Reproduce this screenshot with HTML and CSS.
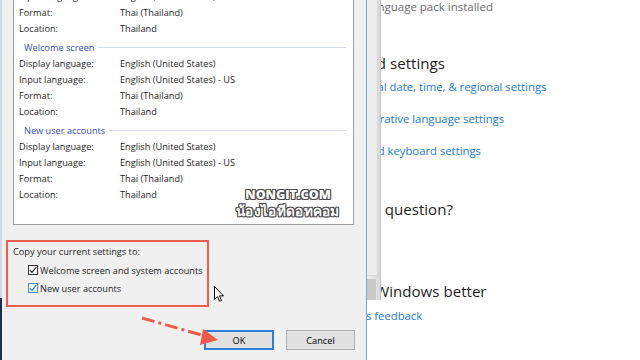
FILE: index.html
```html
<!DOCTYPE html>
<html lang="en">

<head>
  <meta charset="UTF-8">
  <meta name="viewport" content="width=device-width, initial-scale=1.0">
  <title>Region settings</title>
  <link rel="stylesheet" href="styles.css">
</head>

<body>
  <div class="screen">

    <!-- settings app behind the dialog -->
    <div class="settings">
      <p class="status">Language pack installed</p>
      <h2 class="heading related">Related settings</h2>
      <a class="link link-first" href="#">Additional date, time, &amp; regional settings</a>
      <a class="link" href="#">Administrative language settings</a>
      <a class="link" href="#">Advanced keyboard settings</a>
      <h2 class="heading question">Have a question?</h2>
      <h2 class="heading better">Make Windows better</h2>
      <a class="link feedback" href="#">Give us feedback</a>
    </div>

    <!-- edge of the region window peeking out -->
    <div class="backwin">
      <div class="backwin-track"></div>
      <div class="backwin-thumb"></div>
    </div>

    <div class="dialog">
      <div class="panel">
        <div class="panel-body">
          <div class="row"><span>Input language:</span><span>English (United States) - US</span></div>
          <div class="row"><span>Format:</span><span>Thai (Thailand)</span></div>
          <div class="row"><span>Location:</span><span>Thailand</span></div>

          <div class="group-title"><span>Welcome screen</span></div>
          <div class="row"><span>Display language:</span><span>English (United States)</span></div>
          <div class="row"><span>Input language:</span><span>English (United States) - US</span></div>
          <div class="row"><span>Format:</span><span>Thai (Thailand)</span></div>
          <div class="row"><span>Location:</span><span>Thailand</span></div>

          <div class="group-title"><span>New user accounts</span></div>
          <div class="row"><span>Display language:</span><span>English (United States)</span></div>
          <div class="row"><span>Input language:</span><span>English (United States) - US</span></div>
          <div class="row"><span>Format:</span><span>Thai (Thailand)</span></div>
          <div class="row"><span>Location:</span><span>Thailand</span></div>
        </div>
      </div>

      <div class="copy-box">
        <div class="copy-title">Copy your current settings to:</div>
        <label class="check check-first">
          <span class="box"><svg width="8" height="8" viewBox="0 0 8 8"><polyline points="0.8,4.2 3,6.4 7.3,1.2" fill="none" stroke="#222" stroke-width="1.2"/></svg></span>
          Welcome screen and system accounts
        </label>
        <label class="check hover">
          <span class="box"><svg width="8" height="8" viewBox="0 0 8 8"><polyline points="0.8,4.2 3,6.4 7.3,1.2" fill="none" stroke="#2b7fd6" stroke-width="1.2"/></svg></span>
          New user accounts
        </label>
      </div>

      <div class="buttons">
        <button class="btn default" type="button">OK</button>
        <button class="btn" type="button">Cancel</button>
      </div>
    </div>

    <div class="watermark">
      <div class="wm-en">NONGIT.COM</div>
      <div class="wm-th">น้องไอทีดอทคอม</div>
    </div>

    <svg class="arrow" width="640" height="360" viewBox="0 0 640 360">
      <line x1="142" y1="318" x2="205" y2="336" stroke="#ef5a4b" stroke-width="3" stroke-dasharray="13 4 3 4" />
      <polygon points="203,329 218,340 200,345" fill="#ef5a4b" />
    </svg>

    <svg class="cursor" width="12" height="17" viewBox="0 0 12 17">
      <path d="M0.5 0.5 V13.5 L3.6 10.6 L5.6 15.3 L7.5 14.5 L5.5 9.9 H9.7 Z" fill="#fff" stroke="#111" stroke-width="1" />
    </svg>
  </div>
</body>

</html>
```

FILE: styles.css
```css
body {
  margin: 0;
  background: #fff;
}

.screen {
  position: relative;
  width: 640px;
  height: 360px;
  overflow: hidden;
  background: #fff;
  font-family: "Open Sans", "Noto Sans", sans-serif;
}

/* settings page */
.settings {
  position: absolute;
  left: 320px;
  top: 0;
  width: 320px;
  height: 360px;
  padding-left: 13px;
  box-sizing: border-box;
  background: #fff;
  white-space: nowrap;
}

.status {
  margin: -1px 0 0 32px;
  font-size: 11.5px;
  line-height: 16px;
  color: #6b6b6b;
}

.heading {
  margin: 0;
  font-size: 15.1px;
  font-weight: 400;
  line-height: 22px;
  color: #1e1e1e;
}

.related {
  margin-top: 37px;
}

.question {
  margin-top: 39px;
}

.better {
  margin-top: 60px;
}

.link {
  display: block;
  font-size: 11.3px;
  line-height: 16px;
  color: #1b7bd3;
  text-decoration: none;
}

.link-first {
  margin-top: 5px;
}

.link+.link {
  margin-top: 16px;
}

.link.feedback {
  margin-top: 6px;
}

/* window behind */
.backwin {
  position: absolute;
  left: 367px;
  top: 0;
  width: 14px;
  height: 300px;
  box-sizing: border-box;
  border-right: 1px solid #c4c4c4;
  background: linear-gradient(90deg, #f1f1f1, #e6e6e6 50%, #d8d8d8);
  display: flex;
  flex-direction: column;
}

.backwin-track {
  flex: 1;
  width: 10px;
  border-right: 1px solid #d6d6d6;
  border-bottom: 1px solid #d6d6d6;
  background: #ededed;
}

.backwin-thumb {
  width: 9px;
  height: 21px;
  margin-top: 3px;
  background: #c9c9c9;
}

/* dialog */
.dialog {
  position: absolute;
  left: 0;
  top: 0;
  width: 367px;
  height: 360px;
  box-sizing: border-box;
  border-right: 1px solid #74a7dc;
  background: #f0f0f0;
  font-size: 9.2px;
  color: #000;
}

.dialog::before {
  content: "";
  position: absolute;
  left: 0;
  top: 0;
  width: 2px;
  height: 100%;
  background: linear-gradient(#d3d9e0 0 298px, #1f2f45 298px);
}

.panel {
  margin-left: 13px;
  width: 341px;
  height: 225px;
  box-sizing: border-box;
  border: 1px solid #a0a0a0;
  border-top: 0;
  background: #fff;
  overflow: hidden;
}

.panel-body {
  margin-top: -11px;
  padding: 0 7px 0 5px;
}

.row {
  display: grid;
  grid-template-columns: 101px 1fr;
  height: 16px;
  line-height: 16px;
  white-space: nowrap;
  color: #1e1e1e;
}

.group-title {
  display: flex;
  align-items: center;
  height: 16px;
  margin: 2px 0 1px;
  padding-left: 5px;
  color: #3553b4;
  white-space: nowrap;
}

.group-title::after {
  content: "";
  flex: 1;
  height: 1px;
  margin-left: 4px;
  background: #d4dde9;
}

.copy-box {
  margin: 15px 0 0 6px;
  width: 203px;
  height: 67px;
  box-sizing: border-box;
  border: 2px solid #ee5e50;
  padding: 2px 0 0 5px;
  color: #1e1e1e;
}

.copy-title {
  line-height: 16px;
}

.check {
  display: flex;
  align-items: center;
  gap: 2px;
  height: 18px;
  padding-left: 15px;
  white-space: nowrap;
}

.check-first {
  margin-top: 1px;
}

.box {
  display: flex;
  align-items: center;
  justify-content: center;
  width: 10px;
  height: 10px;
  box-sizing: border-box;
  border: 1px solid #333;
  background: #fff;
}

.check.hover .box {
  border-color: #3d8ee4;
}

.buttons {
  display: flex;
  justify-content: flex-end;
  gap: 12px;
  margin-top: 23px;
  padding-right: 11px;
}

.btn {
  width: 69px;
  height: 20px;
  padding: 0;
  border: 1px solid #adadad;
  background: #e1e1e1;
  font: inherit;
  color: #000;
}

.btn.default {
  width: 70px;
  border: 2px solid #2b7fd4;
}

/* watermark */
.watermark {
  position: absolute;
  left: 228px;
  top: 186px;
  width: 120px;
  text-align: center;
  color: #fff;
  font-weight: 800;
  text-shadow: 1px 0 #4c4c4c, -1px 0 #4c4c4c, 0 1px #4c4c4c, 0 -1px #4c4c4c,
    1px 1px #4c4c4c, -1px -1px #4c4c4c, 1px -1px #4c4c4c, -1px 1px #4c4c4c;
}

.wm-en {
  font-size: 12.5px;
  line-height: 17px;
}

.wm-th {
  font-size: 13.5px;
  line-height: 17px;
  letter-spacing: 0.3px;
}

.arrow {
  position: absolute;
  left: 0;
  top: 0;
  pointer-events: none;
}

.cursor {
  position: absolute;
  left: 214px;
  top: 286px;
}
```
